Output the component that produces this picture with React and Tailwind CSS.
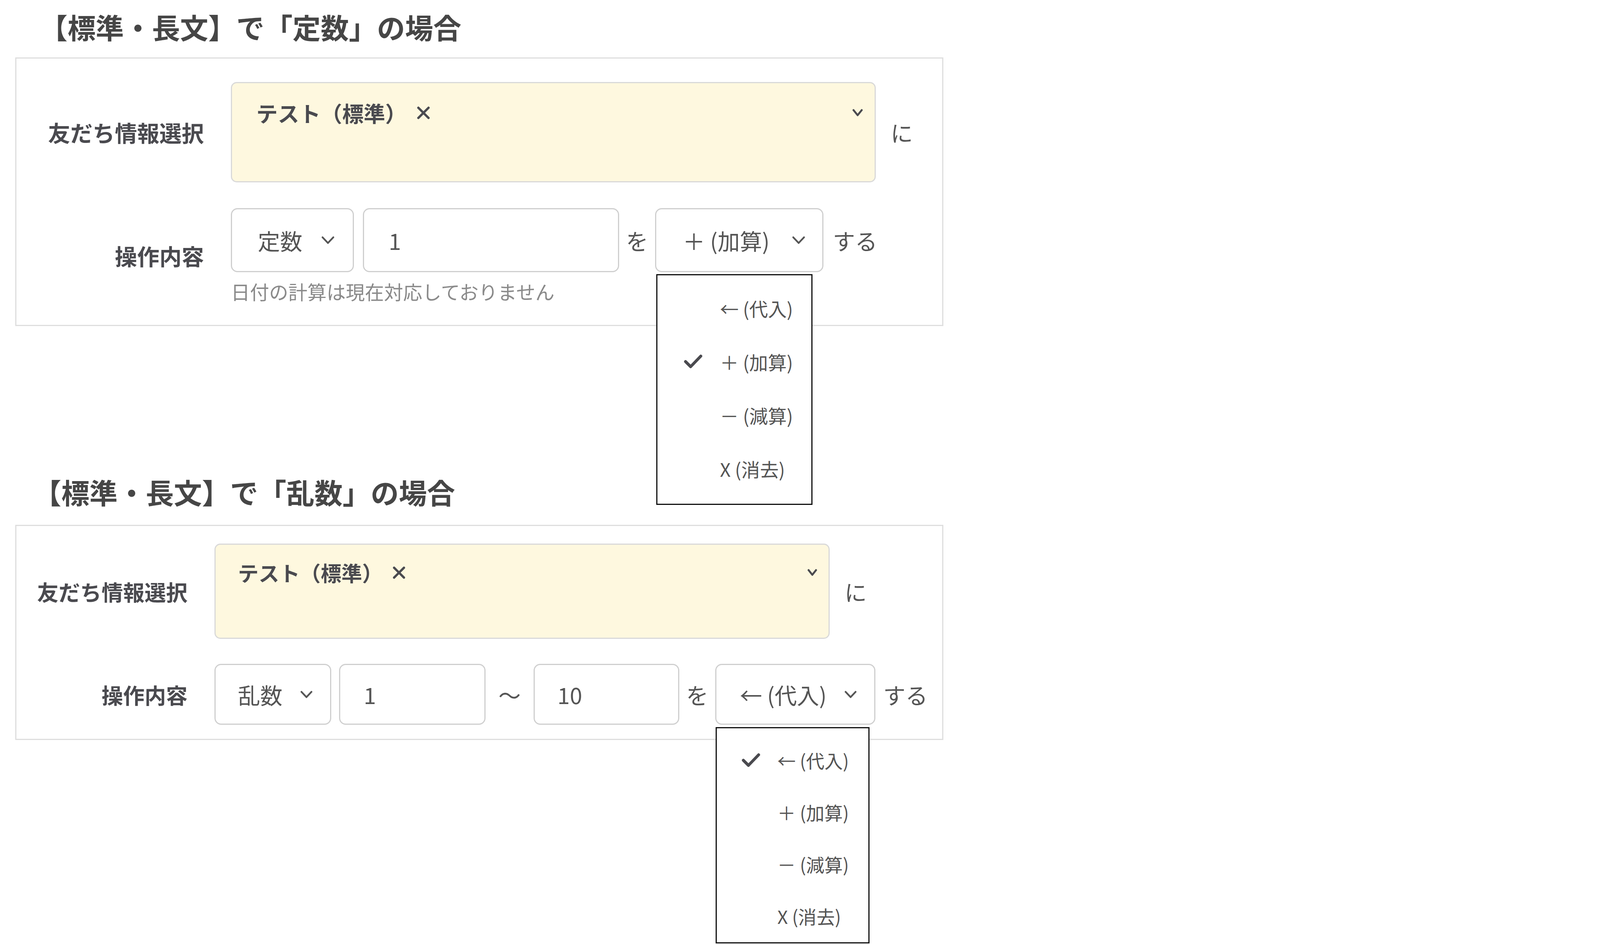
import React from "react";

function Chevron({ className, sw = 4.5, vw = 33, vh = 20 }) {
  return (
    <svg viewBox={`0 0 ${vw} ${vh}`} className={className} fill="none" stroke="currentColor" strokeWidth={sw} strokeLinecap="round" strokeLinejoin="round">
      <polyline points={`${sw / 2 + 0.5},${sw / 2 + 0.5} ${vw / 2},${vh - sw / 2 - 0.5} ${vw - sw / 2 - 0.5},${sw / 2 + 0.5}`} />
    </svg>
  );
}

function XIcon({ className }) {
  return (
    <svg viewBox="0 0 34 34" className={className} fill="none" stroke="currentColor" strokeWidth="6" strokeLinecap="round">
      <line x1="4" y1="4" x2="30" y2="30" />
      <line x1="30" y1="4" x2="4" y2="30" />
    </svg>
  );
}

function Check({ className }) {
  return (
    <svg viewBox="0 0 47 35" className={className} fill="none" stroke="currentColor" strokeWidth="7.5" strokeLinecap="round" strokeLinejoin="round">
      <polyline points="4,18 17,31 43,4" />
    </svg>
  );
}

const OPTIONS = ["← (代入)", "＋ (加算)", "－ (減算)", "X (消去)"];

function Dropdown1() {
  return (
    <div className="absolute left-0 top-[166px] z-10 w-[400px] h-[591px] border-[3px] border-[#111] bg-white pt-[15px] text-[48px] text-[#555] leading-none">
      {OPTIONS.map((o, i) => (
        <div key={o} className="flex items-center h-[137px] pl-[68px]">
          <div className="w-[47px] h-[35px] text-[#4a4a4f]">{i === 1 ? <Check className="w-[47px] h-[35px]" /> : null}</div>
          <div className="ml-[45px] whitespace-nowrap">{o}</div>
        </div>
      ))}
    </div>
  );
}

function Dropdown2() {
  return (
    <div className="absolute left-[-2px] top-[159px] z-10 w-[394px] h-[554px] border-[3px] border-[#111] bg-white pt-[15px] text-[47px] text-[#555] leading-none">
      {OPTIONS.map((o, i) => (
        <div key={o} className="flex items-center h-[133px] pl-[64px]">
          <div className="w-[47px] h-[35px] text-[#4a4a4f]">{i === 0 ? <Check className="w-[47px] h-[35px]" /> : null}</div>
          <div className="ml-[44px] whitespace-nowrap">{o}</div>
        </div>
      ))}
    </div>
  );
}

export default function App() {
  return (
    <div className="w-[4134px] h-[2420px] bg-white overflow-hidden font-['Noto_Sans_CJK_JP','Noto_Sans',sans-serif] text-[#4a4a4f]">
      {/* Section 1 */}
      <div className="ml-[39px] w-[2376px]">
        <div className="h-[136px] flex items-center pl-[62px] text-[72px] font-bold leading-none text-[#464646] whitespace-nowrap">
          【標準・長文】で「定数」の場合
        </div>
        <div className="mt-[11px] border-[3px] border-[#dedede] pt-[60px] pb-[56px]">
          <div className="flex items-center">
            <div className="w-[480px] text-right text-[57px] font-bold leading-none whitespace-nowrap">友だち情報選択</div>
            <div className="ml-[69px] w-[1651px] h-[257px] rounded-[15px] border-[3px] border-[#d9d9d9] bg-[#fef8df] flex items-start pl-[62px] pr-[30px] pt-[37px]">
              <div className="flex items-center h-[77px] text-[55px] font-bold leading-none whitespace-nowrap">
                テスト（標準）
                <XIcon className="ml-[26px] w-[34px] h-[34px]" />
              </div>
              <div className="ml-auto h-[77px] flex items-center">
                <Chevron className="w-[27px] h-[19px]" sw={5} vw={27} vh={19} />
              </div>
            </div>
            <div className="ml-[38px] text-[57px] leading-none text-[#555]">に</div>
          </div>
          <div className="mt-[66px] flex items-center">
            <div className="w-[480px] text-right text-[57px] font-bold leading-none whitespace-nowrap">操作内容</div>
            <div className="ml-[69px]">
              <div className="flex items-center h-[164px] text-[57px] leading-none text-[#555]">
                <div className="flex items-center w-[315px] h-[164px] rounded-[17px] border-[3px] border-[#cfcfcf] bg-white pl-[66px] whitespace-nowrap">
                  定数
                  <Chevron className="ml-[49px] w-[33px] h-[20px]" />
                </div>
                <div className="ml-[23px] flex items-center w-[656px] h-[164px] rounded-[17px] border-[3px] border-[#cfcfcf] bg-white pl-[63px]">1</div>
                <div className="w-[92px] text-center">を</div>
                <div className="relative flex items-center w-[431px] h-[164px] rounded-[17px] border-[3px] border-[#cfcfcf] bg-white pl-[68px] whitespace-nowrap">
                  ＋ (加算)
                  <Chevron className="ml-[58px] w-[33px] h-[20px]" />
                  <Dropdown1 />
                </div>
                <div className="ml-[24px] whitespace-nowrap">する</div>
              </div>
              <div className="mt-[18px] h-[61px] leading-[61px] text-[49px] text-[#8a8a8a] whitespace-nowrap">日付の計算は現在対応しておりません</div>
            </div>
          </div>
        </div>
      </div>

      {/* Section 2 */}
      <div className="ml-[39px] w-[2376px]">
        <div className="mt-[374px] h-[100px] flex items-center pl-[46px] text-[72px] font-bold leading-none text-[#464646] whitespace-nowrap">
          【標準・長文】で「乱数」の場合
        </div>
        <div className="mt-[35px] border-[3px] border-[#dedede] pt-[45px] pb-[36px]">
          <div className="flex items-center">
            <div className="w-[438px] text-right text-[55px] font-bold leading-none whitespace-nowrap">友だち情報選択</div>
            <div className="ml-[69px] w-[1575px] h-[244px] rounded-[15px] border-[3px] border-[#d9d9d9] bg-[#fef8df] flex items-start pl-[57px] pr-[29px] pt-[34px]">
              <div className="flex items-center h-[74px] text-[53px] font-bold leading-none whitespace-nowrap">
                テスト（標準）
                <XIcon className="ml-[25px] w-[33px] h-[33px]" />
              </div>
              <div className="ml-auto h-[74px] flex items-center">
                <Chevron className="w-[25px] h-[18px]" sw={5} vw={25} vh={18} />
              </div>
            </div>
            <div className="ml-[38px] text-[57px] leading-none text-[#555]">に</div>
          </div>
          <div className="mt-[64px] flex items-center">
            <div className="w-[438px] text-right text-[55px] font-bold leading-none whitespace-nowrap">操作内容</div>
            <div className="ml-[69px] flex items-center h-[156px] text-[57px] leading-none text-[#555]">
              <div className="flex items-center w-[299px] h-[156px] rounded-[17px] border-[3px] border-[#cfcfcf] bg-white pl-[57px] whitespace-nowrap">
                乱数
                <Chevron className="ml-[46px] w-[31px] h-[19px]" vw={31} vh={19} />
              </div>
              <div className="ml-[20px] flex items-center w-[375px] h-[156px] rounded-[17px] border-[3px] border-[#cfcfcf] bg-white pl-[60px]">1</div>
              <div className="w-[123px] text-center">〜</div>
              <div className="flex items-center w-[373px] h-[156px] rounded-[17px] border-[3px] border-[#cfcfcf] bg-white pl-[58px]">10</div>
              <div className="w-[92px] text-center">を</div>
              <div className="relative flex items-center w-[410px] h-[156px] rounded-[17px] border-[3px] border-[#cfcfcf] bg-white pl-[60px] whitespace-nowrap">
                ← (代入)
                <Chevron className="ml-[46px] w-[31px] h-[19px]" vw={31} vh={19} />
                <Dropdown2 />
              </div>
              <div className="ml-[20px] whitespace-nowrap">する</div>
            </div>
          </div>
        </div>
      </div>
    </div>
  );
}
